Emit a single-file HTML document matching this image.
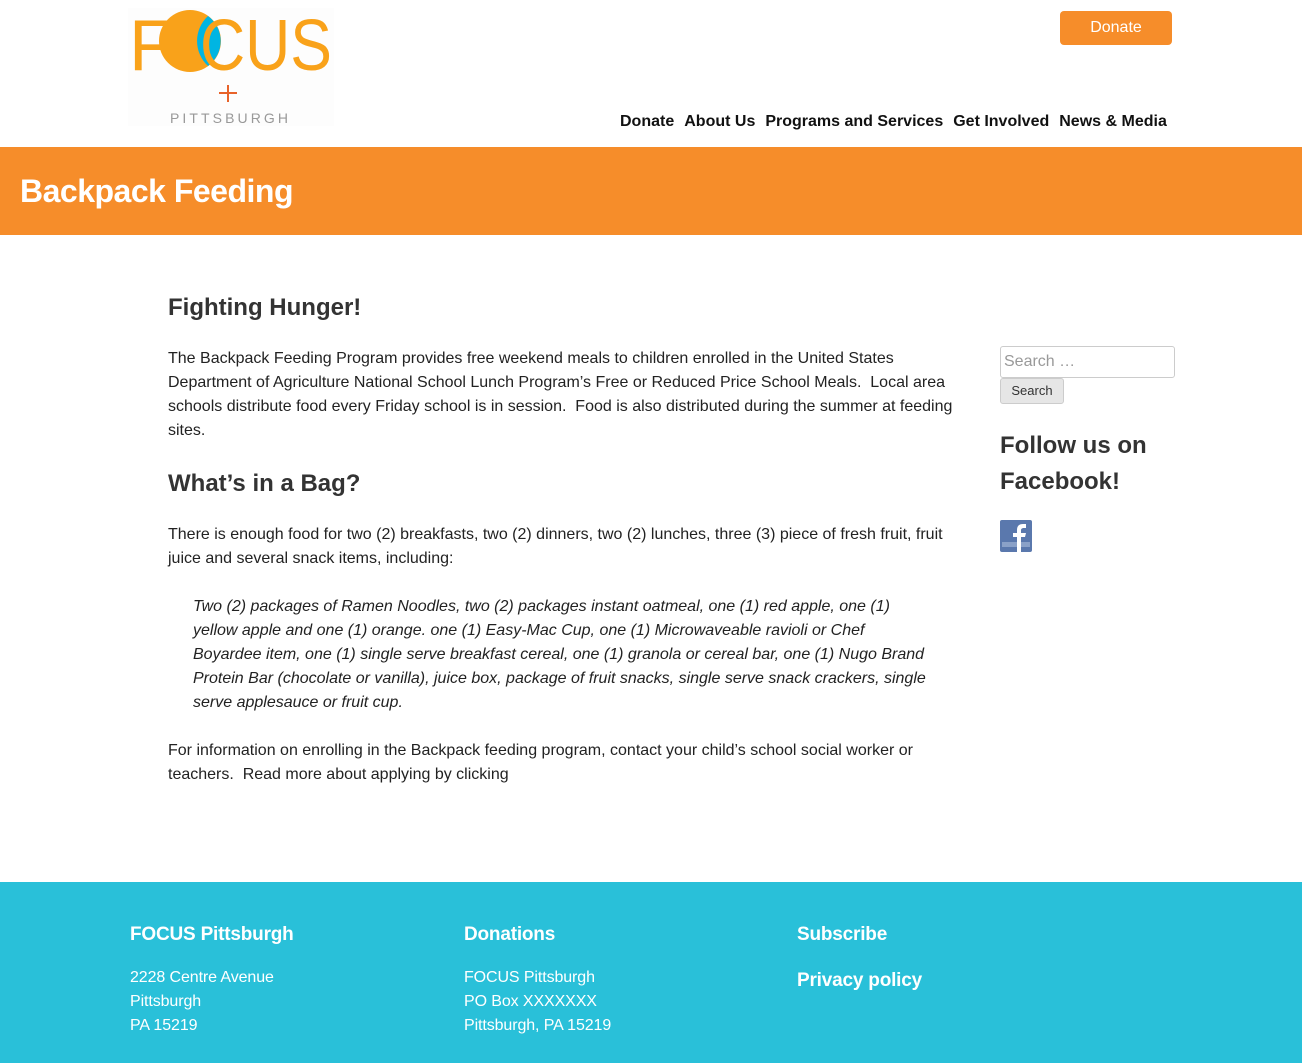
<!DOCTYPE html>
<html><head><style>
body{margin:0;width:1302px;height:1063px;position:relative;font-family:"Liberation Sans",sans-serif;color:#333;background:#fff;overflow:hidden}
.abs{position:absolute}
.btn{left:1060px;top:11px;width:112px;height:34px;background:#f68d2a;border-radius:4px;color:#fff;font-size:16px;text-align:center;line-height:34px}
.nav{top:113px;left:620px;font-size:16px;font-weight:bold;color:#111;white-space:nowrap;word-spacing:0}
.nav span{margin-right:10px}
.band{top:147px;left:0;width:1302px;height:88px;background:#f68d2a}
.band h1{margin:0;position:absolute;left:20px;top:26px;font-size:32px;color:#fff;letter-spacing:-0.5px}
.main{left:168px;top:291px;width:790px;font-size:16px;line-height:24px;color:#222}
.main h2{font-size:24px;margin:0 0 22px;color:#333;line-height:34px}
.main p{margin:0 0 24px}
.main blockquote{font-style:italic;margin:0 29px 24px 25px}
.foot{top:882px;left:0;width:1302px;height:181px;background:#29c0d9;color:#fff}
.foot h3{margin:0;font-size:19px;font-weight:bold;letter-spacing:-0.2px}
.foot p{margin:0;font-size:16px;line-height:24px;letter-spacing:-0.1px}
</style></head><body>
<svg class="abs" style="left:128px;top:8px" width="206" height="120" viewBox="0 0 206 120">
<rect x="0" y="0" width="206" height="118" fill="#fdfdfd"/>
<circle cx="62" cy="33" r="31" fill="#f9a21a"/>
<path d="M80 8 A31 31 0 0 1 80 58 A34 34 0 0 1 80 8Z" fill="#00b5e2"/>
<text x="1" y="62" font-family="Liberation Sans" font-size="72" fill="#f9a21a" textLength="44" lengthAdjust="spacingAndGlyphs">F</text>
<text x="72" y="62" font-family="Liberation Sans" font-size="72" fill="#f9a21a" textLength="132" lengthAdjust="spacingAndGlyphs">CUS</text>
<path d="M100 77 v17 M91 85 h18" stroke="#e8632a" stroke-width="2"/>
<text x="42" y="115" font-family="Liberation Sans" font-size="14" fill="#999" textLength="118" lengthAdjust="spacing">PITTSBURGH</text>
</svg>
<div class="abs btn">Donate</div>
<div class="abs nav"><span>Donate</span><span>About Us</span><span>Programs and Services</span><span>Get Involved</span><span>News &amp; Media</span></div>
<div class="abs band"><h1>Backpack Feeding</h1></div>
<div class="abs main">
<h2>Fighting Hunger!</h2>
<p>The Backpack Feeding Program provides free weekend meals to children enrolled in the United States Department of Agriculture National School Lunch Program’s Free or Reduced Price School Meals.&nbsp; Local area schools distribute food every Friday school is in session.&nbsp; Food is also distributed during the summer at feeding sites.</p>
<h2>What’s in a Bag?</h2>
<p>There is enough food for two (2) breakfasts, two (2) dinners, two (2) lunches, three (3) piece of fresh fruit, fruit juice and several snack items, including:</p>
<blockquote>Two (2) packages of Ramen Noodles, two (2) packages instant oatmeal, one (1) red apple, one (1)<br>yellow apple and one (1) orange. one (1) Easy-Mac Cup, one (1) Microwaveable ravioli or Chef<br>Boyardee item, one (1) single serve breakfast cereal, one (1) granola or cereal bar, one (1) Nugo&nbsp;Brand<br>Protein Bar (chocolate or vanilla), juice box, package of fruit snacks, single serve snack crackers, single<br>serve applesauce or fruit cup.</blockquote>
<p>For information on enrolling in the Backpack feeding program, contact your child’s school social worker or teachers.&nbsp; Read more about applying by clicking</p>
</div>
<div class="abs" style="left:1000px;top:346px;width:170px;height:30px;border:1px solid #ccc;border-radius:3px;font-size:16px;color:#999;line-height:30px;padding-left:3px">Search …</div>
<div class="abs" style="left:1000px;top:378px;width:62px;height:24px;border:1px solid #ccc;border-radius:3px;background:#e6e6e6;font-size:13px;text-align:center;line-height:24px;color:#333">Search</div>
<div class="abs" style="left:1000px;top:428px;font-size:24px;font-weight:bold;line-height:36px;color:#333">Follow us on<br>Facebook!</div>
<svg class="abs" style="left:1000px;top:520px" width="32" height="32" viewBox="0 0 32 32"><rect width="32" height="32" rx="2" fill="#5a78ad"/><rect x="2" y="22" width="28" height="5" fill="#8aa1c8"/><path d="M17 32V17h-4v-4h4v-3c0-4 2-6 6-6h3v4h-2c-2 0-3 1-3 2v3h5l-1 4h-4v15z" fill="#fff"/></svg>
<div class="abs foot">
<div class="abs" style="left:130px;top:42px"><h3>FOCUS Pittsburgh</h3><p style="margin-top:20px">2228 Centre Avenue<br>Pittsburgh<br>PA 15219</p></div>
<div class="abs" style="left:464px;top:42px"><h3>Donations</h3><p style="margin-top:20px">FOCUS Pittsburgh<br>PO Box XXXXXXX<br>Pittsburgh, PA 15219</p></div>
<div class="abs" style="left:797px;top:42px"><h3>Subscribe</h3><h3 style="margin-top:24px">Privacy policy</h3></div>
</div>
</body></html>
